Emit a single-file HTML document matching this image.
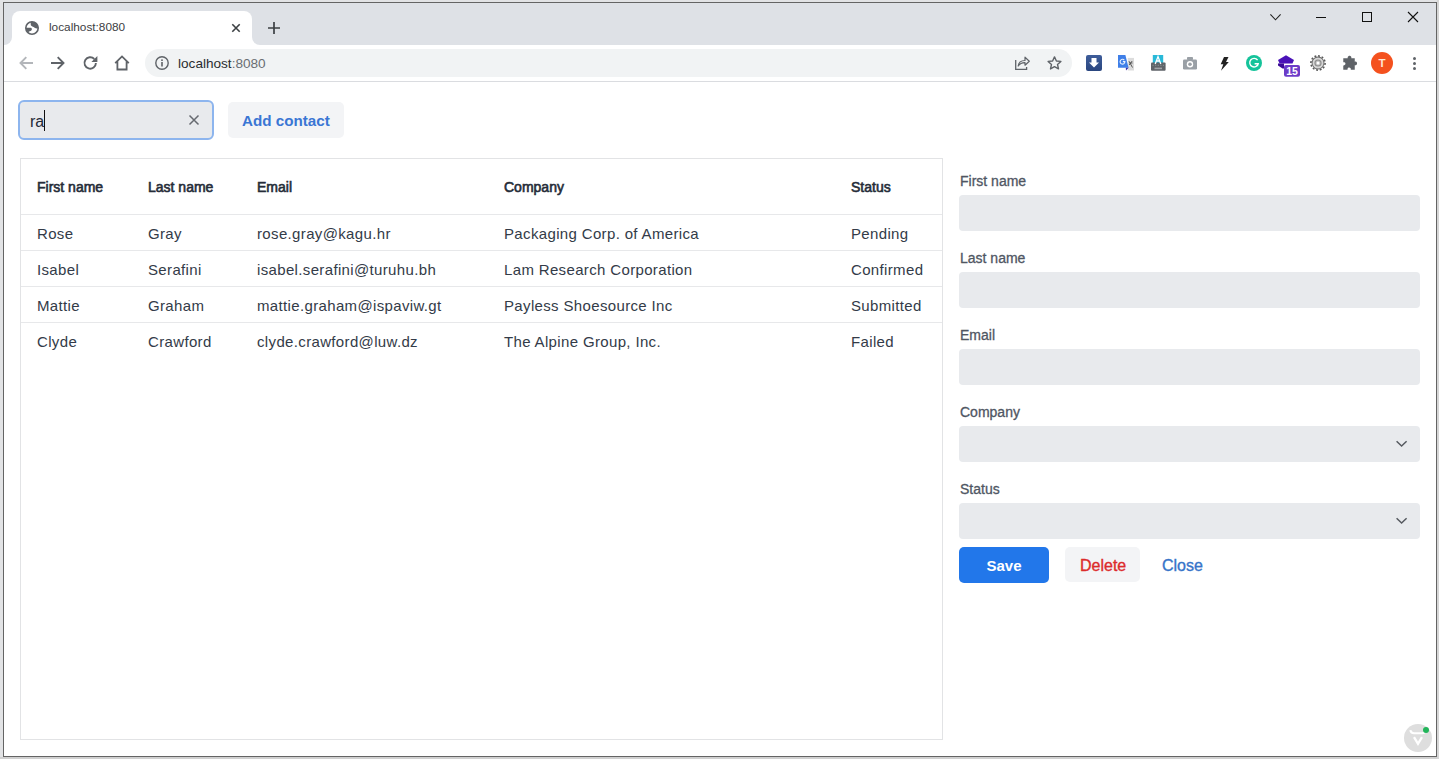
<!DOCTYPE html>
<html><head><meta charset="utf-8">
<style>
*{box-sizing:border-box;margin:0;padding:0}
html,body{width:1439px;height:759px;overflow:hidden;background:#e2e3e5;font-family:"Liberation Sans",sans-serif;position:relative}
.a{position:absolute}
.t{position:absolute;white-space:nowrap;line-height:1}
svg{position:absolute;overflow:visible}
</style></head><body>
<!-- window frame -->
<div class="a" style="left:0;top:757px;width:1439px;height:2px;background:#d0d0d0"></div>
<div class="a" style="left:1437px;top:0;width:2px;height:759px;background:#d6d6d6"></div>
<div class="a" style="left:3px;top:2px;width:1434px;height:755px;background:#fff;border:1px solid #646464"></div>
<!-- tab strip -->
<div class="a" style="left:4px;top:3px;width:1432px;height:42px;background:#dee1e6"></div>
<!-- active tab -->
<div class="a" style="left:12px;top:11px;width:240px;height:34px;background:#fff;border-radius:8px 8px 0 0"></div>
<div class="a" style="left:4px;top:37px;width:8px;height:8px;background:#fff"></div>
<div class="a" style="left:4px;top:37px;width:8px;height:8px;background:#dee1e6;border-radius:0 0 8px 0"></div>
<div class="a" style="left:252px;top:37px;width:8px;height:8px;background:#fff"></div>
<div class="a" style="left:252px;top:37px;width:8px;height:8px;background:#dee1e6;border-radius:0 0 0 8px"></div>
<!-- globe icon -->
<svg style="left:25px;top:21px" width="14" height="14" viewBox="0 0 14 14">
  <circle cx="7" cy="7" r="6.2" fill="#fff" stroke="#5f6368" stroke-width="1.6"/>
  <path d="M5.8 0.9 C5.6 2.5 5.6 4 6.3 4.8 C7.2 5.8 8.5 5.6 9.3 6.6 C9.8 7.2 10.5 7.6 13.2 7.4 A6.3 6.3 0 0 0 5.8 0.9 Z" fill="#5f6368"/>
  <path d="M0.7 6.8 H5.5 C7 6.8 7.3 8.6 6.3 9.6 C5.5 10.4 4 10.3 3 11.5 A6.3 6.3 0 0 1 0.7 6.8 Z" fill="#5f6368"/>
</svg>
<div class="t" style="left:49px;top:22px;font-size:11.8px;color:#3c4043">localhost:8080</div>
<!-- tab close x -->
<svg style="left:232px;top:24px" width="8" height="8" viewBox="0 0 8 8"><path d="M0.3 0.3 L7.7 7.7 M7.7 0.3 L0.3 7.7" stroke="#3c4043" stroke-width="1.6"/></svg>
<!-- new tab + -->
<svg style="left:268px;top:22px" width="12" height="12" viewBox="0 0 12 12"><path d="M6 0 V12 M0 6 H12" stroke="#3c4043" stroke-width="1.7"/></svg>
<!-- window controls -->
<svg style="left:1270px;top:14px" width="11" height="7" viewBox="0 0 11 7"><path d="M0.4 0.4 L5.5 5.8 L10.6 0.4" stroke="#222" stroke-width="1.1" fill="none"/></svg>
<div class="a" style="left:1316px;top:17px;width:10px;height:1px;background:#111"></div>
<div class="a" style="left:1362px;top:12px;width:10px;height:10px;border:1px solid #111"></div>
<svg style="left:1408px;top:12px" width="10" height="10" viewBox="0 0 10 10"><path d="M0 0 L10 10 M10 0 L0 10" stroke="#111" stroke-width="1.1"/></svg>

<!-- toolbar -->
<div class="a" style="left:4px;top:81px;width:1432px;height:1px;background:#dadce0"></div>
<!-- back -->
<svg style="left:19px;top:56px" width="14" height="14" viewBox="0 0 14 14"><path d="M14 7 H1.8 M7.3 1.2 L1.5 7 L7.3 12.8" stroke="#b3b6ba" stroke-width="1.9" fill="none"/></svg>
<!-- forward -->
<svg style="left:51px;top:56px" width="14" height="14" viewBox="0 0 14 14"><path d="M0 7 H12.2 M6.7 1.2 L12.5 7 L6.7 12.8" stroke="#5f6368" stroke-width="1.9" fill="none"/></svg>
<!-- reload -->
<svg style="left:83px;top:55px" width="15" height="15" viewBox="0 0 15 15"><path d="M12.9 8 A5.7 5.7 0 1 1 11.3 4" stroke="#5f6368" stroke-width="1.9" fill="none"/><path d="M14.4 0.9 V6.9 H8.4 Z" fill="#5f6368"/></svg>
<!-- home -->
<svg style="left:114px;top:55px" width="16" height="16" viewBox="0 0 16 16"><path d="M1.2 8.2 L8 1.4 L14.8 8.2 M3.4 6.4 V14.5 H12.6 V6.4" stroke="#5f6368" stroke-width="1.8" fill="none" stroke-linejoin="miter"/></svg>
<!-- omnibox -->
<div class="a" style="left:145px;top:49px;width:927px;height:28px;border-radius:14px;background:#f1f3f4"></div>
<svg style="left:155px;top:56px" width="14" height="14" viewBox="0 0 14 14"><circle cx="7" cy="7" r="6.2" stroke="#5f6368" stroke-width="1.4" fill="none"/><rect x="6.2" y="6" width="1.6" height="4.5" fill="#5f6368"/><rect x="6.2" y="3.4" width="1.6" height="1.6" fill="#5f6368"/></svg>
<div class="t" style="left:178px;top:57px;font-size:13.6px;color:#2a2c30">localhost<span style="color:#6a6e73">:8080</span></div>
<!-- share -->
<svg style="left:1015px;top:56px" width="15" height="14" viewBox="0 0 15 14"><path d="M0.7 4 V13.3 H11.6 V11" stroke="#5f6368" stroke-width="1.3" fill="none"/><path d="M3.2 10 C3.6 6 6.5 4.5 10 4.5 V1.2 L14.3 5.3 L10 9.2 V6.6 C7 6.5 4.8 7.7 3.2 10 Z" stroke="#5f6368" stroke-width="1.2" fill="none" stroke-linejoin="round"/></svg>
<!-- star -->
<svg style="left:1046.5px;top:56px" width="15" height="14" viewBox="0 0 15 14"><path d="M7.5 0.9 L9.4 5 L13.9 5.4 L10.5 8.4 L11.5 12.9 L7.5 10.6 L3.5 12.9 L4.5 8.4 L1.1 5.4 L5.6 5 Z" stroke="#5f6368" stroke-width="1.4" fill="none" stroke-linejoin="round"/></svg>
<!-- ext: download -->
<div class="a" style="left:1086px;top:55px;width:16px;height:16px;border-radius:2px;background:linear-gradient(#3e5d9a,#2a467f)"></div>
<svg style="left:1086px;top:55px" width="16" height="16" viewBox="0 0 16 16"><path d="M5.5 3 H10.5 V7.5 H13 L8 12.5 L3 7.5 H5.5 Z" fill="#fff"/></svg>
<!-- ext: translate -->
<svg style="left:1117px;top:55px" width="17" height="17" viewBox="0 0 17 17"><rect x="10.8" y="2.9" width="6.2" height="12.6" fill="#dcdcdc"/><path d="M12 6.2 L15.5 12.5 M15.2 6 L12.2 10 M12.5 8 H15.5" stroke="#4a4a4a" stroke-width="0.9"/><path d="M1 0 H8.4 L11.6 12.8 H1 Z" fill="#3f7fe8"/><path d="M8.8 12.8 H11.6 L9 15.4 Z" fill="#3a2fa8"/><path d="M7.3 5.1 A2.4 2.4 0 1 0 7.9 6.6 H5.9" stroke="#eaf2ff" stroke-width="1.1" fill="none"/></svg>
<!-- ext: keyboard -->
<svg style="left:1151px;top:55px" width="15" height="16" viewBox="0 0 15 16"><rect x="1.8" y="0" width="10.4" height="8" fill="#29b9d8"/><rect x="0" y="7.4" width="14.6" height="8.4" rx="1" fill="#5f6368"/><path d="M4.2 9 L7 1.5 L9.8 9 M5.3 6 H8.7" stroke="#fff" stroke-width="1.3" fill="none"/><rect x="3.5" y="12.6" width="7.5" height="1.6" fill="#a0a4a8"/><path d="M1.5 10.3 H13" stroke="#9aa" stroke-width="0.7" stroke-dasharray="1.2 1.4"/></svg>
<!-- ext: camera -->
<svg style="left:1183px;top:57px" width="14" height="13" viewBox="0 0 14 13"><rect x="0" y="2.5" width="14" height="10" rx="1.2" fill="#9aa0a6"/><rect x="4" y="0" width="6" height="3" rx="0.8" fill="#9aa0a6"/><circle cx="7" cy="7.3" r="3.2" fill="#fff"/><circle cx="7" cy="7.3" r="1.8" fill="#9aa0a6"/></svg>
<!-- ext: lightning -->
<svg style="left:1220px;top:57px" width="9" height="14" viewBox="0 0 9 14"><path d="M4 0 H8.5 L6 5 H8.8 L1 13.8 L3.3 7.2 H0.7 Z" fill="#222"/></svg>
<!-- ext: grammarly -->
<svg style="left:1246px;top:55px" width="16" height="16" viewBox="0 0 16 16"><circle cx="8" cy="8" r="8" fill="#15c39a"/><path d="M11.6 5.2 A4.3 4.3 0 1 0 12.2 8.8 H8.6" stroke="#fff" stroke-width="1.4" fill="none"/><path d="M10.4 10.6 L12.2 9 L12.2 11.4 Z" fill="#fff"/></svg>
<!-- ext: purple hat with badge -->
<svg style="left:1277px;top:54px" width="24" height="24" viewBox="0 0 24 24"><path d="M1 6 L9 1.2 L17 6 L15.5 9.6 H2.5 Z" fill="#4a12b8"/><path d="M1 9.6 H7 V14.5 L5.5 14.5 L1 11.5 Z" fill="#3a0a98"/><rect x="7" y="11" width="16" height="11.8" rx="2" fill="#6c3bc8"/><text x="15" y="21.2" font-family="Liberation Sans" font-size="10.5" font-weight="700" fill="#fff" text-anchor="middle">15</text></svg>
<!-- ext: gear -->
<svg style="left:1310px;top:55px" width="16" height="16" viewBox="0 0 16 16"><circle cx="8" cy="8" r="7.1" fill="none" stroke="#5a5a5a" stroke-width="1.6" stroke-dasharray="1.9 1.8"/><circle cx="8" cy="8" r="6.4" fill="#666"/><circle cx="8" cy="8" r="5.5" fill="#d6d6d6"/><circle cx="8" cy="8" r="3.6" fill="#8c8c8c"/><circle cx="8" cy="8" r="2.5" fill="#bdbdbd"/><circle cx="8" cy="8" r="1.5" fill="#fff"/></svg>
<!-- extensions puzzle -->
<svg style="left:1342px;top:55px" width="17" height="17" viewBox="0 0 16 16"><path d="M6 1.2 C7.5 0.2 9.2 1.2 8.8 3 H12 V6.3 C13.7 5.8 14.8 7.6 13.9 8.9 C13.3 9.8 12 9.7 12 9.7 V13.8 H8.3 C8.6 12.2 7 11.2 5.8 12 C5.1 12.5 5.2 13.8 5.2 13.8 H1.2 V9.8 C2.7 10.2 3.8 8.5 3 7.4 C2.5 6.6 1.2 6.8 1.2 6.8 V3 H5.3 C5.2 2.3 5.4 1.6 6 1.2 Z" fill="#5f6368"/></svg>
<!-- avatar -->
<div class="a" style="left:1371px;top:52px;width:22px;height:22px;border-radius:50%;background:#f4511e"></div>
<div class="t" style="left:1371px;width:22px;text-align:center;top:58px;font-size:11.5px;font-weight:700;color:#ffe6d6">T</div>
<!-- kebab -->
<div class="a" style="left:1413px;top:57px;width:3px;height:3px;border-radius:50%;background:#5f6368"></div>
<div class="a" style="left:1413px;top:62px;width:3px;height:3px;border-radius:50%;background:#5f6368"></div>
<div class="a" style="left:1413px;top:67px;width:3px;height:3px;border-radius:50%;background:#5f6368"></div>

<!-- ============ PAGE ============ -->
<!-- search -->
<div class="a" style="left:18px;top:100px;width:196px;height:40px;border:2px solid #8db5ee;border-radius:6px;background:#e8eaed"></div>
<div class="t" style="left:30px;top:114px;font-size:16px;color:#1f2937">ra</div>
<div class="a" style="left:44px;top:110px;width:1px;height:21px;background:#111"></div>
<svg style="left:189px;top:114.5px" width="10" height="10" viewBox="0 0 10 10"><path d="M0.5 0.5 L9.5 9.5 M9.5 0.5 L0.5 9.5" stroke="#666a70" stroke-width="1.5"/></svg>
<!-- add contact -->
<div class="a" style="left:228px;top:102px;width:116px;height:36px;border-radius:5px;background:#f3f4f6"></div>
<div class="t" style="left:242px;top:113px;font-size:15.2px;font-weight:700;color:#3a76d4">Add contact</div>

<!-- table -->
<div class="a" style="left:20px;top:158px;width:923px;height:582px;border:1px solid #e2e3e5"></div>
<div class="a" style="left:21px;top:214px;width:921px;height:1px;background:#e7e8ea"></div>
<div class="a" style="left:21px;top:250px;width:921px;height:1px;background:#e7e8ea"></div>
<div class="a" style="left:21px;top:286px;width:921px;height:1px;background:#e7e8ea"></div>
<div class="a" style="left:21px;top:322px;width:921px;height:1px;background:#e7e8ea"></div>

<div style="font-size:14px;font-weight:400;-webkit-text-stroke:0.6px #252c38;color:#252c38">
<div class="t" style="left:37px;top:180px">First name</div>
<div class="t" style="left:148px;top:180px">Last name</div>
<div class="t" style="left:257px;top:180px">Email</div>
<div class="t" style="left:504px;top:180px">Company</div>
<div class="t" style="left:851px;top:180px">Status</div>
</div>
<div style="font-size:15px;letter-spacing:0.35px;color:#333b48">
<div class="t" style="left:37px;top:226px">Rose</div>
<div class="t" style="left:148px;top:226px">Gray</div>
<div class="t" style="left:257px;top:226px">rose.gray@kagu.hr</div>
<div class="t" style="left:504px;top:226px">Packaging Corp. of America</div>
<div class="t" style="left:851px;top:226px">Pending</div>

<div class="t" style="left:37px;top:262px">Isabel</div>
<div class="t" style="left:148px;top:262px">Serafini</div>
<div class="t" style="left:257px;top:262px">isabel.serafini@turuhu.bh</div>
<div class="t" style="left:504px;top:262px">Lam Research Corporation</div>
<div class="t" style="left:851px;top:262px">Confirmed</div>

<div class="t" style="left:37px;top:298px">Mattie</div>
<div class="t" style="left:148px;top:298px">Graham</div>
<div class="t" style="left:257px;top:298px">mattie.graham@ispaviw.gt</div>
<div class="t" style="left:504px;top:298px">Payless Shoesource Inc</div>
<div class="t" style="left:851px;top:298px">Submitted</div>

<div class="t" style="left:37px;top:334px">Clyde</div>
<div class="t" style="left:148px;top:334px">Crawford</div>
<div class="t" style="left:257px;top:334px">clyde.crawford@luw.dz</div>
<div class="t" style="left:504px;top:334px">The Alpine Group, Inc.</div>
<div class="t" style="left:851px;top:334px">Failed</div>
</div>

<!-- form -->
<div style="font-size:14px;font-weight:400;-webkit-text-stroke:0.3px #4f5663;color:#4f5663">
<div class="t" style="left:960px;top:174px">First name</div>
<div class="t" style="left:960px;top:251px">Last name</div>
<div class="t" style="left:960px;top:328px">Email</div>
<div class="t" style="left:960px;top:405px">Company</div>
<div class="t" style="left:960px;top:482px">Status</div>
</div>
<div class="a" style="left:959px;top:195px;width:461px;height:36px;border-radius:4px;background:#e8eaed"></div>
<div class="a" style="left:959px;top:272px;width:461px;height:36px;border-radius:4px;background:#e8eaed"></div>
<div class="a" style="left:959px;top:349px;width:461px;height:36px;border-radius:4px;background:#e8eaed"></div>
<div class="a" style="left:959px;top:426px;width:461px;height:36px;border-radius:4px;background:#e8eaed"></div>
<div class="a" style="left:959px;top:503px;width:461px;height:36px;border-radius:4px;background:#e8eaed"></div>
<svg style="left:1396px;top:440px" width="12" height="7" viewBox="0 0 12 7"><path d="M0.6 1.2 L5.6 6 L10.6 1.2" stroke="#55595f" stroke-width="1.5" fill="none"/></svg>
<svg style="left:1396px;top:517px" width="12" height="7" viewBox="0 0 12 7"><path d="M0.6 1.2 L5.6 6 L10.6 1.2" stroke="#55595f" stroke-width="1.5" fill="none"/></svg>

<div class="a" style="left:959px;top:547px;width:90px;height:36px;border-radius:5px;background:#2277ea"></div>
<div class="t" style="left:959px;width:90px;text-align:center;top:558px;font-size:15px;font-weight:700;color:#fff">Save</div>
<div class="a" style="left:1065px;top:547px;width:75px;height:35px;border-radius:5px;background:#f3f4f6"></div>
<div class="t" style="left:1080px;top:558px;font-size:16px;color:#dc2b2b;-webkit-text-stroke:0.35px #dc2b2b">Delete</div>
<div class="t" style="left:1162px;top:558px;font-size:16px;color:#3674c9;-webkit-text-stroke:0.35px #3674c9">Close</div>

<!-- vaadin devtools -->
<div class="a" style="left:1404px;top:724px;width:28px;height:28px;border-radius:50%;background:#dedede"></div>
<svg style="left:1404px;top:724px" width="28" height="28" viewBox="0 0 28 28"><path d="M6.4 6.2 C6.6 8.4 7.6 9.2 10 9.2 H18 C20.4 9.2 21.4 8.4 21.6 6.2" stroke="#fff" stroke-width="2" fill="none"/><path d="M10 13.2 L14 19.8 L18 13.2" stroke="#fff" stroke-width="2.3" fill="none"/></svg>
<div class="a" style="left:1423px;top:727px;width:6px;height:6px;border-radius:50%;background:#22b55a"></div>
</body></html>
